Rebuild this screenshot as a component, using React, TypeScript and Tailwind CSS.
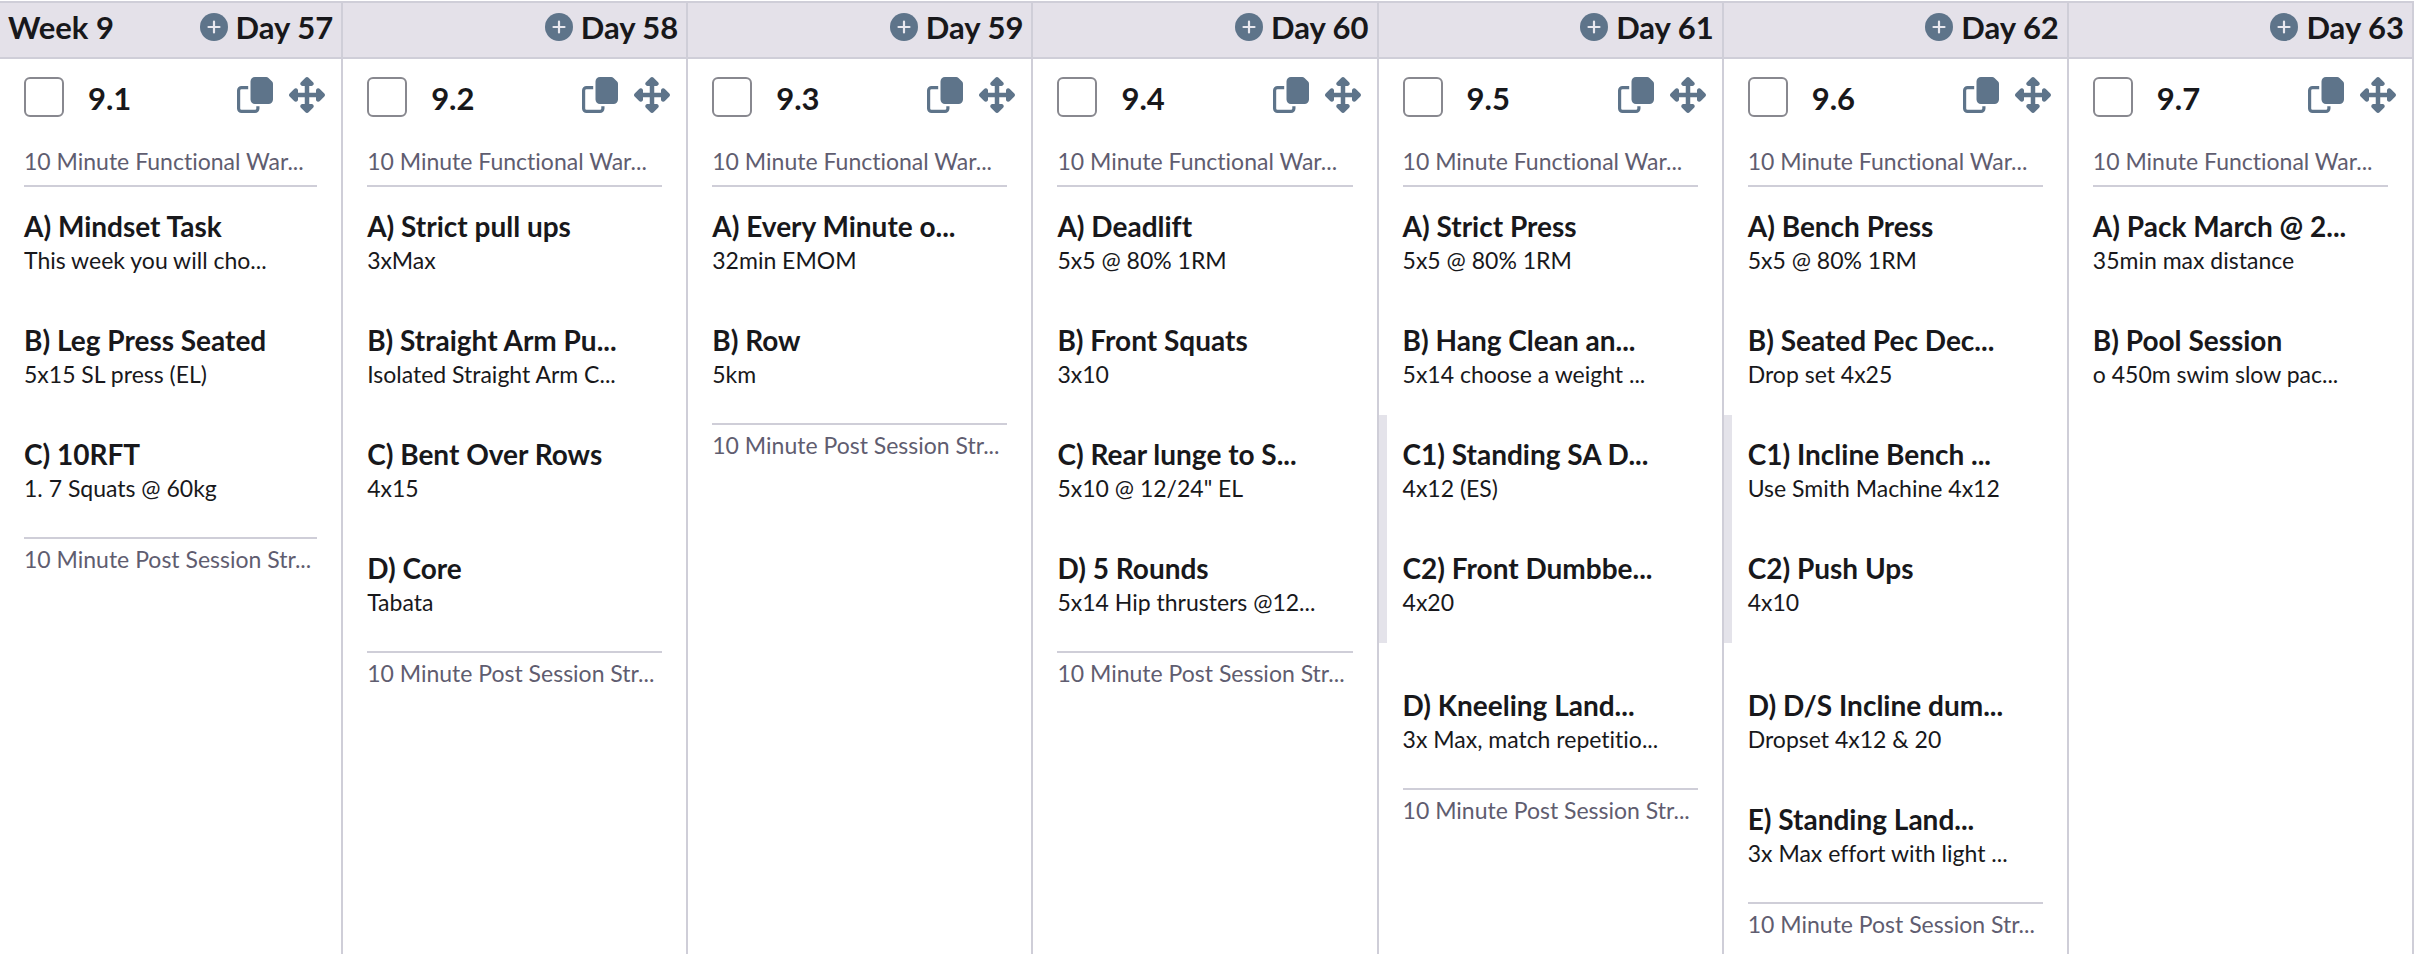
import React from "react";
import { FaUpDownLeftRight } from "react-icons/fa6";

type Exercise = { title: string; detail: string };
type Block = Exercise | { group: Exercise[] };
type Day = {
  day: number;
  session: string;
  warmUp: string;
  blocks: Block[];
  coolDown?: string;
};

const WARM_UP = "10 Minute Functional War...";
const COOL_DOWN = "10 Minute Post Session Str...";

const days: Day[] = [
  {
    day: 57,
    session: "9.1",
    warmUp: WARM_UP,
    blocks: [
      { title: "A) Mindset Task", detail: "This week you will cho..." },
      { title: "B) Leg Press Seated", detail: "5x15 SL press (EL)" },
      { title: "C) 10RFT", detail: "1. 7 Squats @ 60kg" },
    ],
    coolDown: COOL_DOWN,
  },
  {
    day: 58,
    session: "9.2",
    warmUp: WARM_UP,
    blocks: [
      { title: "A) Strict pull ups", detail: "3xMax" },
      { title: "B) Straight Arm Pu...", detail: "Isolated Straight Arm C..." },
      { title: "C) Bent Over Rows", detail: "4x15" },
      { title: "D) Core", detail: "Tabata" },
    ],
    coolDown: COOL_DOWN,
  },
  {
    day: 59,
    session: "9.3",
    warmUp: WARM_UP,
    blocks: [
      { title: "A) Every Minute o...", detail: "32min EMOM" },
      { title: "B) Row", detail: "5km" },
    ],
    coolDown: COOL_DOWN,
  },
  {
    day: 60,
    session: "9.4",
    warmUp: WARM_UP,
    blocks: [
      { title: "A) Deadlift", detail: "5x5 @ 80% 1RM" },
      { title: "B) Front Squats", detail: "3x10" },
      { title: "C) Rear lunge to S...", detail: '5x10 @ 12/24" EL' },
      { title: "D) 5 Rounds", detail: "5x14 Hip thrusters @12..." },
    ],
    coolDown: COOL_DOWN,
  },
  {
    day: 61,
    session: "9.5",
    warmUp: WARM_UP,
    blocks: [
      { title: "A) Strict Press", detail: "5x5 @ 80% 1RM" },
      { title: "B) Hang Clean an...", detail: "5x14 choose a weight ..." },
      {
        group: [
          { title: "C1) Standing SA D...", detail: "4x12 (ES)" },
          { title: "C2) Front Dumbbe...", detail: "4x20" },
        ],
      },
      { title: "D) Kneeling Land...", detail: "3x Max, match repetitio..." },
    ],
    coolDown: COOL_DOWN,
  },
  {
    day: 62,
    session: "9.6",
    warmUp: WARM_UP,
    blocks: [
      { title: "A) Bench Press", detail: "5x5 @ 80% 1RM" },
      { title: "B) Seated Pec Dec...", detail: "Drop set 4x25" },
      {
        group: [
          { title: "C1) Incline Bench ...", detail: "Use Smith Machine 4x12" },
          { title: "C2) Push Ups", detail: "4x10" },
        ],
      },
      { title: "D) D/S Incline dum...", detail: "Dropset 4x12 & 20" },
      { title: "E) Standing Land...", detail: "3x Max effort with light ..." },
    ],
    coolDown: COOL_DOWN,
  },
  {
    day: 63,
    session: "9.7",
    warmUp: WARM_UP,
    blocks: [
      { title: "A) Pack March @ 2...", detail: "35min max distance" },
      { title: "B) Pool Session", detail: "o 450m swim slow pac..." },
    ],
  },
];

function PlusIcon() {
  return (
    <svg viewBox="0 0 28 28" className="size-7" aria-hidden="true">
      <circle cx="14" cy="14" r="14" fill="#5e748a" />
      <path d="M14 8.5v11M8.5 14h11" stroke="#e9e8ef" strokeWidth="2.2" strokeLinecap="round" />
    </svg>
  );
}

function CopyIcon() {
  return (
    <svg viewBox="0 0 36 36" className="size-9" aria-hidden="true">
      <path
        d="M18 0h11.2c.9 0 1.7.3 2.3.9l3.6 3.6c.6.6.9 1.4.9 2.3V22.500c0 2.500-2 4.500-4.500 4.500H18c-2.500 0-4.500-2-4.500-4.500v-18C13.500 2 15.500 0 18 0z"
        fill="currentColor"
      />
      <path
        d="M11.200 10.600H4.500c-1.600 0-2.900 1.300-2.900 2.900v18c0 1.600 1.300 2.900 2.900 2.900H18c1.600 0 2.900-1.300 2.900-2.900V29.200"
        fill="none"
        stroke="currentColor"
        strokeWidth="3.200"
      />
    </svg>
  );
}

function ExerciseItem({ title, detail }: Exercise) {
  return (
    <div className="whitespace-nowrap px-6 pb-[25px] pt-[21px]">
      <h3 className="text-[28px] font-bold leading-9">{title}</h3>
      <p className="text-[23px] leading-8">{detail}</p>
    </div>
  );
}

function DayColumn({ data, week }: { data: Day; week?: string }) {
  const id = `session-${data.day}`;
  return (
    <section className="flex flex-col border-r-2 border-[#cfced8]">
      <header className="flex h-[58px] items-center justify-between border-y-2 border-[#cfced8] bg-[#e4e1e9] px-2 pb-1.5">
        <h1 className="text-[31px] font-bold leading-9">{week}</h1>
        <div className="flex items-center gap-2">
          <button type="button" aria-label={`Add to day ${data.day}`}>
            <PlusIcon />
          </button>
          <h2 className="whitespace-nowrap text-[31px] font-bold leading-9">Day {data.day}</h2>
        </div>
      </header>
      <div className="flex items-start justify-between pl-6 pr-4 pt-[18px]">
        <div className="flex items-start gap-6">
          <input
            id={id}
            type="checkbox"
            className="size-10 appearance-none rounded-md border-2 border-[#88888f] bg-white checked:bg-[#5e748a]"
          />
          <label htmlFor={id} className="text-[31px] font-bold leading-[42px]">
            {data.session}
          </label>
        </div>
        <div className="flex gap-4 text-[#5e748a]">
          <button type="button" aria-label={`Copy session ${data.session}`}>
            <CopyIcon />
          </button>
          <button type="button" aria-label={`Move session ${data.session}`}>
            <FaUpDownLeftRight className="size-9" />
          </button>
        </div>
      </div>
      <p className="mx-6 mt-[26px] whitespace-nowrap border-b-2 border-[#cfced8] pb-2 text-[23px] leading-8 text-[#5f5d70]">
        {data.warmUp}
      </p>
      {data.blocks.map((block, i) =>
        "group" in block ? (
          <div key={i} className="mb-[23px] border-l-8 border-[#e4e3ea]">
            <div className="-ml-2">
              {block.group.map((item) => (
                <ExerciseItem key={item.title} {...item} />
              ))}
            </div>
          </div>
        ) : (
          <ExerciseItem key={i} {...block} />
        ),
      )}
      {data.coolDown && (
        <p className="mx-6 mt-2 whitespace-nowrap border-t-2 border-[#cfced8] pt-1 text-[23px] leading-8 text-[#5f5d70]">
          {data.coolDown}
        </p>
      )}
    </section>
  );
}

export default function App() {
  return (
    <main className="grid min-h-screen grid-cols-[343fr_repeat(6,345fr)] bg-white pr-[2px] pt-px font-[Lato,sans-serif] text-[#18181b] [font-variant-ligatures:none]">
      {days.map((d, i) => (
        <DayColumn key={d.day} data={d} week={i === 0 ? "Week 9" : undefined} />
      ))}
    </main>
  );
}
